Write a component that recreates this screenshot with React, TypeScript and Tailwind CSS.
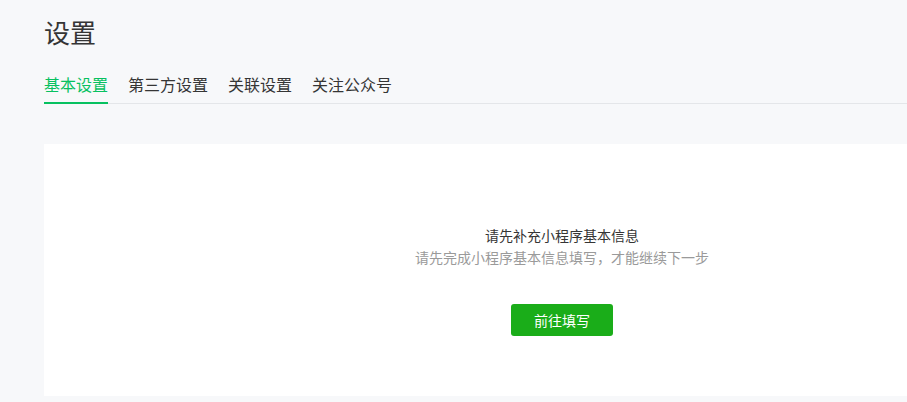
import React from "react";

const tabs = ["基本设置", "第三方设置", "关联设置", "关注公众号"];

export default function App() {
    const [active, setActive] = React.useState(0);
    return (
        <div
            className="w-full h-[402px] overflow-hidden bg-[#f7f8fa] pl-[44px]"
            style={{ fontFamily: '"Noto Sans CJK SC", "Noto Sans", sans-serif' }}>
            <h1 className="pt-[15px] h-[56px] text-[26px] leading-[34px] text-[#353535]">
                设置
            </h1>
            <div className="flex gap-5 border-b border-[#e4e6e9] h-[48px] items-end">
                {tabs.map((tab, i) => (
                    <button
                        key={tab}
                        onClick={() => setActive(i)}
                        className={
                            i === active
                                ? "-mb-px pb-[6px] border-b-2 border-[#07c160] text-[16px] leading-[24px] text-[#07c160]"
                                : "-mb-px pb-[6px] border-b-2 border-transparent text-[16px] leading-[24px] text-[#353535]"
                        }>
                        {tab}
                    </button>
                ))}
            </div>
            <div className="mt-[40px] w-[1036px] h-[252px] bg-white flex flex-col items-center pt-[80px]">
                <p className="text-[14px] leading-[22px] text-[#353535]">
                    请先补充小程序基本信息
                </p>
                <p className="text-[14px] leading-[22px] text-[#9a9a9a]">
                    请先完成小程序基本信息填写，才能继续下一步
                </p>
                <button className="mt-[36px] w-[102px] h-[32px] rounded-[3px] bg-[#1aad19] text-white text-[14px]">
                    前往填写
                </button>
            </div>
        </div>
    );
}
